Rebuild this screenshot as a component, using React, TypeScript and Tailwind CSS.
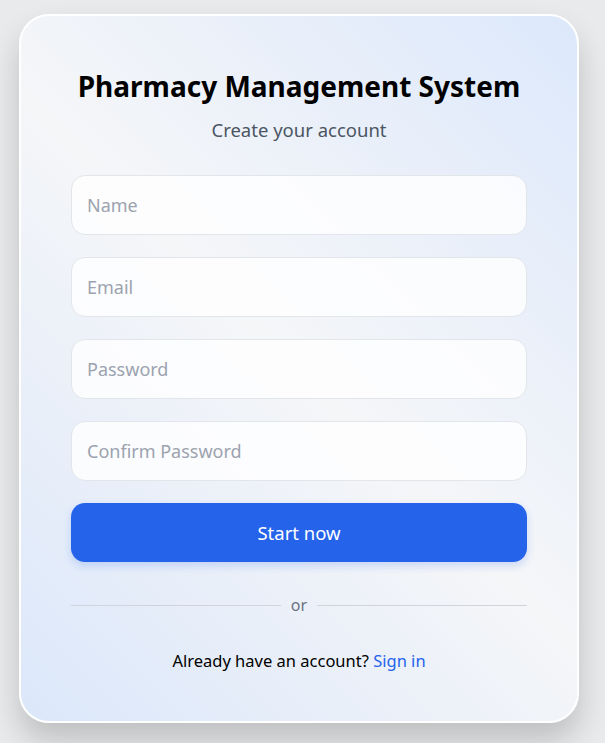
import React from "react";

const fields = ["Name", "Email", "Password", "Confirm Password"];

const App = () => {
  return (
    <div
      className="min-h-[743px] w-full bg-[#e9eaec] px-[19px] pt-[14px] pb-[20px]"
      style={{ fontFamily: '"Noto Sans", "Open Sans", sans-serif' }}
    >
      <div className="w-[560px] h-[709px] rounded-[30px] border-2 border-white bg-[linear-gradient(45deg,#dbe7fa_0%,#f5f6f8_50%,#dce8fb_100%)] shadow-[0_18px_30px_rgba(0,0,0,0.18)] px-[50px] pt-[48px]">
        <h1 className="text-center text-[28px] leading-[44px] font-bold text-black tracking-[0px]">
          Pharmacy Management System
        </h1>
        <p className="mt-[8px] text-center text-[18.5px] leading-[28px] text-[#4b5563]">
          Create your account
        </p>
        <form className="mt-[31px] flex flex-col gap-[22px]">
          {fields.map((f) => (
            <input
              key={f}
              placeholder={f}
              className="h-[60px] w-full rounded-[14px] border border-[#e2e5ea] bg-white/80 px-[15px] text-[18px] text-black placeholder:text-[#9ca3af] outline-none"
            />
          ))}
          <button
            type="button"
            className="h-[59px] w-full rounded-[14px] bg-[#2563eb] text-[18.5px] text-white shadow-[0_4px_8px_rgba(37,99,235,0.2)]"
          >
            Start now
          </button>
        </form>
        <div className="mt-[33px] flex items-center gap-[10px]">
          <div className="h-px flex-1 bg-[#d1d5db]" />
          <span className="text-[16px] leading-[20px] text-[#6b7280]">or</span>
          <div className="h-px flex-1 bg-[#d1d5db]" />
        </div>
        <p className="mt-[34px] text-center text-[16.5px] leading-[24px] text-black">
          Already have an account?{" "}
          <a href="#" className="text-[#2563eb]">
            Sign in
          </a>
        </p>
      </div>
    </div>
  );
};

export default App;
